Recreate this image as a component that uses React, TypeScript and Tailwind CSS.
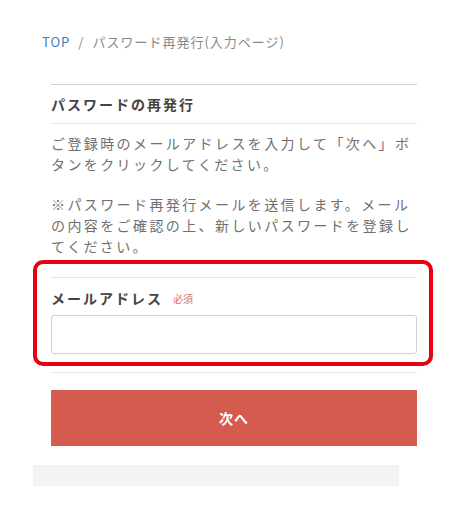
import React from "react";

export default function App() {
  return (
    <div
      className="w-[453px] h-[515px] bg-white relative overflow-hidden"
      style={{ fontFamily: '"Noto Sans CJK JP", "Noto Sans", sans-serif' }}
    >
      <div className="pl-[42px] pt-[33px] text-[13px] leading-[18px] tracking-[1px] text-[#888] flex gap-[8px]">
        <span className="text-[#3d7cc9]">TOP</span>
        <span>/</span>
        <span>パスワード再発行(入力ページ)</span>
      </div>

      <div className="ml-[51px] w-[366px] mt-[33px]">
        <div className="border-t border-[#cfcfcf]">
          <h1 className="h-[39px] flex items-center text-[14px] font-bold tracking-[2px] text-[#444] border-b border-[#e3e3e3]">
            パスワードの再発行
          </h1>
        </div>
        <p className="pt-[9px] text-[14px] leading-[21px] tracking-[2.4px] text-[#707070]">
          ご登録時のメールアドレスを入力して「次へ」ボタンをクリックしてください。
        </p>
        <p className="mt-[19px] text-[14px] leading-[21px] tracking-[2.4px] text-[#707070]">
          ※パスワード再発行メールを送信します。メールの内容をご確認の上、新しいパスワードを登録してください。
        </p>

        <div className="relative mt-[20px] border-t border-[#e3e3e3] pt-[10px]">
          <div className="flex items-center gap-[10px] h-[20px]">
            <span className="text-[14px] font-bold tracking-[2px] text-[#444]">メールアドレス</span>
            <span className="text-[10px] text-[#e0705f]">必須</span>
          </div>
          <input
            type="text"
            className="mt-[7px] block w-full h-[39px] border border-[#d0d0d0] rounded-[3px] outline-none"
          />
          <div className="absolute left-[-18px] top-[-18px] w-[400px] h-[106px] border-[4px] border-[#e60012] rounded-[10px] pointer-events-none" />
        </div>

        <div className="mt-[18px] border-t border-[#e3e3e3]" />
        <button className="mt-[17px] w-full h-[56px] bg-[#d45b4e] text-white text-[14px] font-bold tracking-[1px] flex items-center justify-center">
          次へ
        </button>
      </div>

      <div className="ml-[33px] mt-[19px] w-[366px] h-[21px] bg-[#f2f3f3]" />
    </div>
  );
}
